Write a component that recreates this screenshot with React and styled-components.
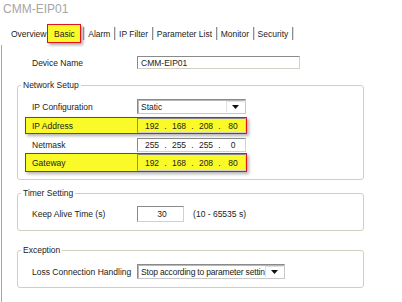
import React from "react";
import styled, { createGlobalStyle } from "styled-components";

const GlobalStyle = createGlobalStyle`
  *, *::before, *::after { box-sizing: border-box; }
  html, body { margin: 0; padding: 0; background: #fff; }
  body {
    font-family: "Liberation Sans", Arial, sans-serif;
    font-size: 8.5px;
    color: #222;
    overflow: hidden;
  }
`;

const Window = styled.div`
  width: 402px;
  height: 302px;
  display: flex;
  flex-direction: column;
  background: #fff;
`;

const Title = styled.div`
  font-size: 12px;
  line-height: 16px;
  padding: 1px 0 0 3px;
  color: #a6a6a6;
`;

const TabBar = styled.div`
  display: flex;
  align-items: center;
  height: 19px;
  margin-top: 7px;
  padding-left: 11px;
  line-height: 12px;
`;

const Tab = styled.div`
  padding: ${(p) => (p.first ? "0" : "0 3.8px")};
  white-space: nowrap;
`;

const ActiveTab = styled.div`
  width: 34px;
  height: 19px;
  margin-left: 1px;
  margin-right: 2px;
  display: flex;
  align-items: center;
  justify-content: center;
  background: #fafa28;
  border: 1px solid #e0141e;
  box-shadow: 2px 2px 3px rgba(0, 0, 0, 0.35);
`;

const Sep = styled.div`
  width: 1px;
  height: 13px;
  background: #8e8e8e;
  box-shadow: 1px 0 0 #dcdcdc;
`;

const Panel = styled.div`
  flex: 1;
  margin: 2px 0 0 1px;
  border-left: 1px solid #a8a8a8;
  padding: 10px 0 0 15px;
  display: flex;
  flex-direction: column;
  align-items: flex-start;
`;

const Row = styled.div`
  display: flex;
  align-items: center;
  width: ${(p) => (p.wide ? "auto" : "222px")};
  height: ${(p) => p.h}px;
  margin-top: ${(p) => p.mt || 0}px;
  padding-left: ${(p) => (p.wide ? 14 : 6)}px;
  border: 1px solid ${(p) => (p.hl ? "#e0141e" : "transparent")};
  background: ${(p) => (p.hl ? "#fafa28" : "transparent")};
  box-shadow: ${(p) => (p.hl ? "2px 2px 3px rgba(0, 0, 0, 0.3)" : "none")};
`;

const Label = styled.div`
  width: 105px;
  flex-shrink: 0;
  white-space: nowrap;
`;

const Field = styled.div`
  display: flex;
  align-items: center;
  width: ${(p) => p.w}px;
  height: ${(p) => p.h}px;
  padding-left: 3px;
  background: ${(p) => (p.clear ? "transparent" : "#fff")};
  border-top: 1px solid #8a8a8a;
  border-left: 1px solid #8a8a8a;
  border-right: 1px solid #d4d0c8;
  border-bottom: 1px solid #d4d0c8;
  justify-content: ${(p) => (p.center ? "center" : "flex-start")};
  white-space: nowrap;
  overflow: hidden;
`;

const Octet = styled.span`
  width: 22px;
  text-align: center;
`;

const Dot = styled.span`
  width: 5px;
  text-align: center;
`;

const Select = styled.div`
  display: flex;
  align-items: center;
  width: ${(p) => p.w}px;
  height: ${(p) => p.h}px;
  padding: 0 1px 0 3px;
  background: #fff;
  border: 1px solid #8a8a8a;
  border-right-color: #c8c8c8;
  border-bottom-color: #c8c8c8;
  box-shadow: inset 1px 1px 0 #b8b8b8;
`;

const SelectText = styled.span`
  flex: 1;
  white-space: nowrap;
  letter-spacing: ${(p) => (p.tight ? "-0.18px" : "0")};
`;

const DropButton = styled.div`
  width: 18px;
  flex-shrink: 0;
  height: calc(100% - 2px);
  display: flex;
  align-items: center;
  justify-content: center;
  border-top: 1px solid #e2e2e2;
  border-left: 1px solid #e2e2e2;
  background: #fff;
`;

const Group = styled.fieldset`
  width: 347px;
  margin: ${(p) => p.mt}px 0 0 0;
  padding: ${(p) => p.pt}px 0 7px 7px;
  border: 1px solid #d0d0c2;
  border-radius: 3px;
  min-width: 0;
`;

const Legend = styled.legend`
  padding: 0 2px;
  margin-left: -4px;
  font-size: 8.5px;
  line-height: 10px;
  color: #222;
`;

const Hint = styled.span`
  margin-left: 9px;
  white-space: nowrap;
`;

const Arrow = () => (
  <svg width="7" height="4" viewBox="0 0 7 4">
    <path d="M0 0h7L3.5 4z" fill="#111" />
  </svg>
);

const Ip = ({ value, h, clear }) => (
  <Field w={109} h={h} clear={clear}>
    {value.split(".").map((o, i) => (
      <React.Fragment key={i}>
        {i > 0 && <Dot>.</Dot>}
        <Octet>{o}</Octet>
      </React.Fragment>
    ))}
  </Field>
);

const tabs = ["Overview", "Basic", "Alarm", "IP Filter", "Parameter List", "Monitor", "Security"];

export default function App() {
  return (
    <Window>
      <GlobalStyle />
      <Title>CMM-EIP01</Title>
      <TabBar>
        {tabs.map((t, i) => (
          <React.Fragment key={t}>
            {i > 1 && <Sep />}
            {t === "Basic" ? <ActiveTab>{t}</ActiveTab> : <Tab first={i === 0}>{t}</Tab>}
          </React.Fragment>
        ))}
        <Sep />
      </TabBar>
      <Panel>
        <Row wide h={15}>
          <Label>Device Name</Label>
          <Field w={163} h={13}>CMM-EIP01</Field>
        </Row>

        <Group mt={10} pt={8}>
          <Legend>Network Setup</Legend>
          <Row h={17}>
            <Label>IP Configuration</Label>
            <Select w={109} h={15}>
              <SelectText>Static</SelectText>
              <DropButton>
                <Arrow />
              </DropButton>
            </Select>
          </Row>
          <Row h={17} mt={2} hl>
            <Label>IP Address</Label>
            <Ip value="192.168.208.80" h={15} clear />
          </Row>
          <Row h={16} mt={3}>
            <Label>Netmask</Label>
            <Ip value="255.255.255.0" h={14} />
          </Row>
          <Row h={19} hl>
            <Label>Gateway</Label>
            <Ip value="192.168.208.80" h={17} clear />
          </Row>
        </Group>

        <Group mt={8} pt={7}>
          <Legend>Timer Setting</Legend>
          <Row h={18}>
            <Label>Keep Alive Time (s)</Label>
            <Field w={51} h={16} center>
              30
            </Field>
            <Hint>(10 - 65535 s)</Hint>
          </Row>
        </Group>

        <Group mt={14} pt={8}>
          <Legend>Exception</Legend>
          <Row h={17}>
            <Label>Loss Connection Handling</Label>
            <Select w={150} h={15}>
              <SelectText tight>Stop according to parameter settin</SelectText>
              <DropButton>
                <Arrow />
              </DropButton>
            </Select>
          </Row>
        </Group>
      </Panel>
    </Window>
  );
}
